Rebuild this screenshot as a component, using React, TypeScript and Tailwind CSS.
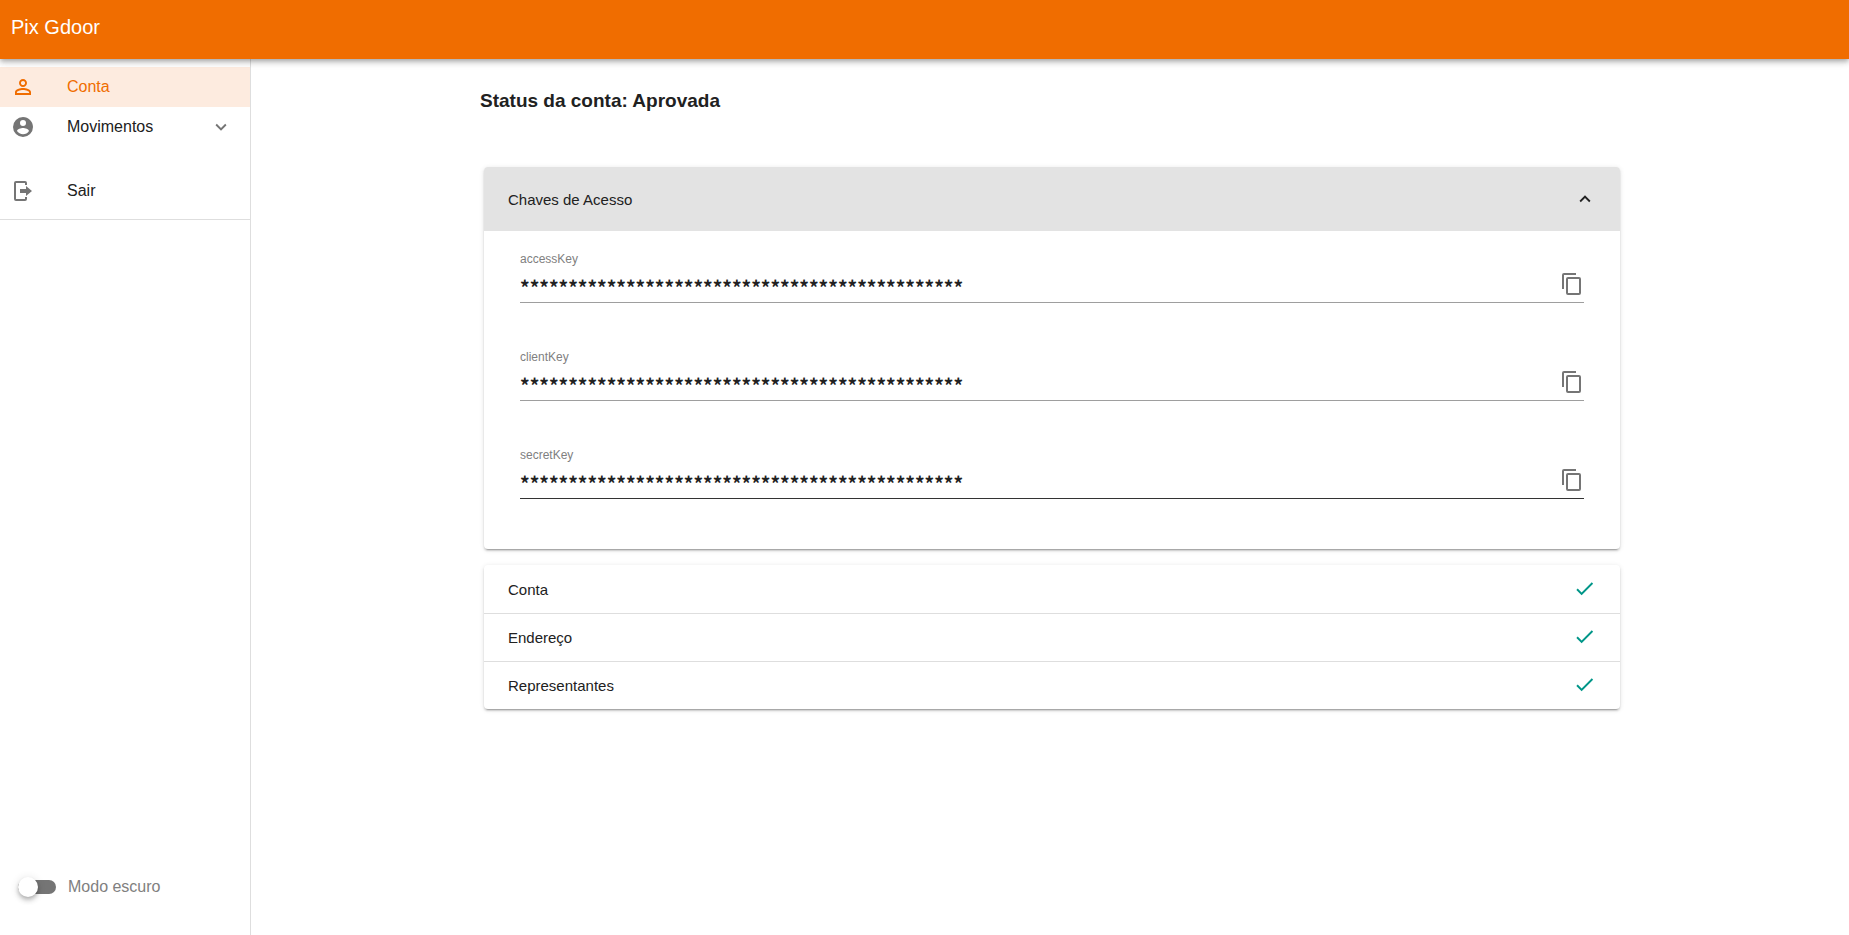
import { useState } from "react";

const paths = {
  person:
    "M12 5.9c1.16 0 2.1.94 2.1 2.1s-.94 2.1-2.1 2.1S9.9 9.16 9.9 8s.94-2.1 2.1-2.1m0 9c2.97 0 6.1 1.46 6.1 2.1v1.1H5.9V17c0-.64 3.13-2.1 6.1-2.1M12 4C9.79 4 8 5.79 8 8s1.79 4 4 4 4-1.79 4-4-1.79-4-4-4zm0 9c-2.67 0-8 1.34-8 4v3h16v-3c0-2.66-5.33-4-8-4z",
  account:
    "M12 19.2c-2.5 0-4.71-1.28-6-3.2.03-2 4-3.1 6-3.1s5.97 1.1 6 3.1a7.232 7.232 0 0 1-6 3.2M12 5a3 3 0 0 1 3 3 3 3 0 0 1-3 3 3 3 0 0 1-3-3 3 3 0 0 1 3-3m0-3A10 10 0 0 0 2 12a10 10 0 0 0 10 10 10 10 0 0 0 10-10c0-5.53-4.5-10-10-10z",
  exit: "M5 2h9a2 2 0 0 1 2 2v2h-2V4H5v16h9v-2h2v2a2 2 0 0 1-2 2H5a2 2 0 0 1-2-2V4a2 2 0 0 1 2-2zM9 10h6V7l6 5-6 5v-3H9z",
  down: "M7.41 8.58 12 13.17l4.59-4.59L18 10l-6 6-6-6z",
  up: "M7.41 15.41 12 10.83l4.59 4.58L18 14l-6-6-6 6z",
  copy: "M19 21H8V7h11m0-2H8a2 2 0 0 0-2 2v14a2 2 0 0 0 2 2h11a2 2 0 0 0 2-2V7a2 2 0 0 0-2-2m-3-4H4a2 2 0 0 0-2 2v14h2V3h12z",
  check: "M21 7 9 19l-5.5-5.5 1.41-1.41L9 16.17 19.59 5.59z",
};

function Icon({ name, className = "size-6" }: { name: keyof typeof paths; className?: string }) {
  return (
    <svg viewBox="0 0 24 24" aria-hidden="true" className={`shrink-0 fill-current ${className}`}>
      <path d={paths[name]} />
    </svg>
  );
}

const cardShadow =
  "shadow-[0_3px_1px_-2px_rgba(0,0,0,0.2),0_2px_2px_0_rgba(0,0,0,0.14),0_1px_5px_0_rgba(0,0,0,0.12)]";

const keys = [
  { id: "accessKey", line: "border-[#9e9e9e]" },
  { id: "clientKey", line: "border-[#9e9e9e]" },
  { id: "secretKey", line: "border-[#333333]" },
];

const masked = "*".repeat(46);

function Sidebar() {
  const [dark, setDark] = useState(false);
  return (
    <aside className="flex w-[251px] shrink-0 flex-col border-r border-[#dedede]">
      <nav className="flex flex-col border-b border-[#dedede] py-2">
        <a href="#conta" className="flex h-10 items-center gap-8 bg-[#fdebdf] pl-[11px] text-[#f06d00]">
          <Icon name="person" />
          Conta
        </a>
        <button type="button" className="flex h-10 items-center gap-8 pr-[18px] pl-[11px] text-left">
          <Icon name="account" className="size-6 text-[#757575]" />
          <span className="grow">Movimentos</span>
          <Icon name="down" className="size-[22px] text-[#757575]" />
        </button>
        <a href="#sair" className="mt-6 flex h-10 items-center gap-8 pl-[11px]">
          <Icon name="exit" className="size-6 text-[#757575]" />
          Sair
        </a>
      </nav>
      <label className="relative mt-auto mb-9 flex h-6 cursor-pointer items-center pl-[18px] text-[#808080]">
        <input
          type="checkbox"
          role="switch"
          checked={dark}
          onChange={(e) => setDark(e.target.checked)}
          className="peer sr-only"
        />
        <span className="mr-3 flex h-[14px] w-[38px] items-center rounded-full bg-[#757575] peer-checked:justify-end">
          <span className="size-5 rounded-full bg-white shadow-[0_2px_4px_-1px_rgba(0,0,0,0.2),0_4px_5px_0_rgba(0,0,0,0.14),0_1px_10px_0_rgba(0,0,0,0.12)]" />
        </span>
        Modo escuro
      </label>
    </aside>
  );
}

export default function App() {
  return (
    <div className="flex min-h-screen flex-col bg-white font-['Liberation_Sans',Arial,sans-serif] text-base text-[#212121]">
      <header className="z-10 flex h-[59px] items-center bg-[#f06d00] px-[11px] pb-[6px] text-xl text-white shadow-[0_2px_4px_-1px_rgba(0,0,0,0.2),0_4px_5px_0_rgba(0,0,0,0.14),0_1px_10px_0_rgba(0,0,0,0.12)]">
        Pix Gdoor
      </header>
      <div className="flex grow">
        <Sidebar />
        <main className="grow pt-[25px] pl-1">
          <div className="mx-auto max-w-[1144px]">
            <h1 className="text-[19px] leading-[34px] font-bold">Status da conta: Aprovada</h1>
            <div className="px-1 pt-[49px] text-[15px]">
              <section className={`rounded ${cardShadow}`}>
                <button
                  type="button"
                  aria-expanded="true"
                  className="flex h-16 w-full items-center justify-between rounded-t bg-[#e3e3e3] px-6 text-left"
                >
                  <span className="pt-0.5">Chaves de Acesso</span>
                  <Icon name="up" className="size-[22px]" />
                </button>
                <div className="flex flex-col gap-11 px-9 pt-[18px] pb-[50px]">
                  {keys.map(({ id, line }) => (
                    <div key={id} className={`flex flex-col border-b pb-1 ${line}`}>
                      <label htmlFor={id} className="text-xs leading-5 text-[#808080]">
                        {id}
                      </label>
                      <div className="flex h-[29px] items-end">
                        <input
                          id={id}
                          readOnly
                          defaultValue={masked}
                          className="h-7 min-w-0 grow bg-transparent pt-1 font-['Noto_Sans_CJK_JP',sans-serif] text-[19px] leading-6 font-bold outline-none"
                        />
                        <button type="button" aria-label={`Copiar ${id}`} className="pb-0.5 text-[#757575]">
                          <Icon name="copy" />
                        </button>
                      </div>
                    </div>
                  ))}
                </div>
              </section>
              <ul className={`mt-4 rounded ${cardShadow}`}>
                {["Conta", "Endereço", "Representantes"].map((title) => (
                  <li key={title} className="flex h-12 border-t border-[#dedede] first:border-transparent">
                    <button type="button" className="flex grow items-center justify-between px-6 text-left">
                      <span className="pt-0.5">{title}</span>
                      <Icon name="check" className="mb-0.5 size-[23px] text-[#009688]" />
                    </button>
                  </li>
                ))}
              </ul>
            </div>
          </div>
        </main>
      </div>
    </div>
  );
}
